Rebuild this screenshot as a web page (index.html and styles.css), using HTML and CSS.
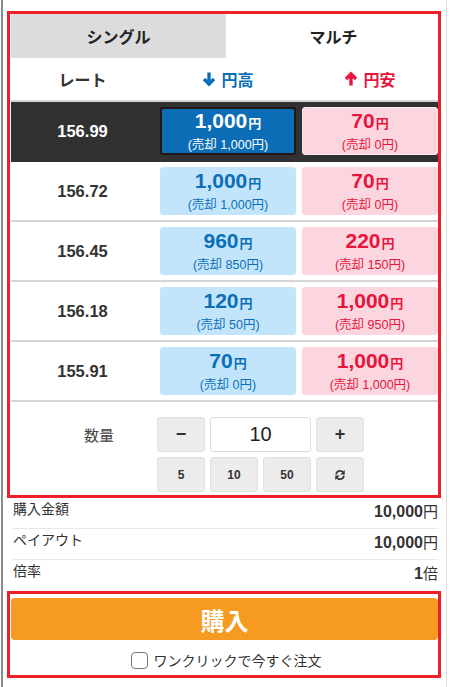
FILE: index.html
```html
<!DOCTYPE html>
<html lang="ja">
<head>
<meta charset="utf-8">
<link rel="stylesheet" href="styles.css">
</head>
<body>
<div class="page">
  <div class="tabs">
    <div class="tab tab-off">シングル</div>
    <div class="tab tab-on">マルチ</div>
  </div>
  <div class="head">
    <div class="hcell">レート</div>
    <div class="hcell h-up"><svg class="arr" viewBox="0 0 14 16"><path d="M7 1.5V13M2 8l5 5 5-5" fill="none" stroke="currentColor" stroke-width="3.4" stroke-linejoin="miter"/></svg>円高</div>
    <div class="hcell h-down"><svg class="arr" viewBox="0 0 14 16"><path d="M7 14.5V3M2 8l5-5 5 5" fill="none" stroke="currentColor" stroke-width="3.4" stroke-linejoin="miter"/></svg>円安</div>
  </div>

  <div class="row row-active">
    <div class="rate">156.99</div>
    <div class="cell cell-blue sel"><div class="amt">1,000<small>円</small></div><div class="sub">(売却 1,000円)</div></div>
    <div class="cell cell-pink selp"><div class="amt">70<small>円</small></div><div class="sub">(売却 0円)</div></div>
  </div>
  <div class="row">
    <div class="rate">156.72</div>
    <div class="cell cell-blue"><div class="amt">1,000<small>円</small></div><div class="sub">(売却 1,000円)</div></div>
    <div class="cell cell-pink"><div class="amt">70<small>円</small></div><div class="sub">(売却 0円)</div></div>
  </div>
  <div class="row">
    <div class="rate">156.45</div>
    <div class="cell cell-blue"><div class="amt">960<small>円</small></div><div class="sub">(売却 850円)</div></div>
    <div class="cell cell-pink"><div class="amt">220<small>円</small></div><div class="sub">(売却 150円)</div></div>
  </div>
  <div class="row">
    <div class="rate">156.18</div>
    <div class="cell cell-blue"><div class="amt">120<small>円</small></div><div class="sub">(売却 50円)</div></div>
    <div class="cell cell-pink"><div class="amt">1,000<small>円</small></div><div class="sub">(売却 950円)</div></div>
  </div>
  <div class="row">
    <div class="rate">155.91</div>
    <div class="cell cell-blue"><div class="amt">70<small>円</small></div><div class="sub">(売却 0円)</div></div>
    <div class="cell cell-pink"><div class="amt">1,000<small>円</small></div><div class="sub">(売却 1,000円)</div></div>
  </div>

  <div class="qty">
    <div class="qty-label">数量</div>
    <div class="qty-grid">
      <div class="btn btn-sign">&minus;</div>
      <div class="qty-input">10</div>
      <div class="btn btn-sign">+</div>
      <div class="btn">5</div>
      <div class="btn">10</div>
      <div class="btn">50</div>
      <div class="btn"><svg class="refresh" viewBox="0 0 16 16"><path d="M2.8 7.2A5.3 5.3 0 0 1 12.2 4.4" fill="none" stroke="currentColor" stroke-width="2.3"/><path d="M14.3 1.3V7.3H8.3z" fill="currentColor"/><path d="M13.2 8.8A5.3 5.3 0 0 1 3.8 11.6" fill="none" stroke="currentColor" stroke-width="2.3"/><path d="M1.7 14.7V8.7H7.7z" fill="currentColor"/></svg></div>
    </div>
  </div>

  <div class="sum">
    <div class="sum-row"><span class="sum-label">購入金額</span><span class="sum-val"><b>10,000</b>円</span></div>
    <div class="sum-row"><span class="sum-label">ペイアウト</span><span class="sum-val"><b>10,000</b>円</span></div>
    <div class="sum-row last"><span class="sum-label">倍率</span><span class="sum-val"><b>1</b>倍</span></div>
  </div>

  <div class="buy">
    <div class="buy-btn">購入</div>
    <label class="one-click"><span class="check"></span>ワンクリックで今すぐ注文</label>
  </div>
</div>
<div class="mark mark-top"></div>
<div class="mark mark-bottom"></div>
</body>
</html>
```
FILE: styles.css
```css
* { box-sizing: border-box; }
html, body { margin: 0; padding: 0; background: #fff; }
body {
  position: relative;
  font-family: "Liberation Sans", "Noto Sans CJK JP", sans-serif;
  color: #333;
  width: 450px;
  height: 687px;
  overflow: hidden;
}
.page {
  margin-left: 1px;
  width: 446px;
  min-height: 687px;
  border-left: 2px solid #8c8c8c;
  border-right: 1px solid #dedede;
  padding: 14px 5px 0 8px;
}
.tabs { display: flex; height: 44px; }
.tab {
  flex: 1;
  display: flex; align-items: center; justify-content: center;
  font-size: 16px; font-weight: bold; color: #222;
}
.tab-off { background: #dcdcdc; }
.tab-on { background: #fff; }

.head {
  display: grid;
  grid-template-columns: 143px 1fr 1fr;
  column-gap: 6px;
  padding-right: 3px;
  height: 44px;
  border-bottom: 2px solid #d4d4d4;
  align-items: center;
}
.hcell {
  display: flex; align-items: center; justify-content: center;
  font-size: 16px; font-weight: bold; color: #333;
}
.h-up { color: #0b6fb8; }
.h-down { color: #e8143c; }
.arr { width: 14px; height: 16px; margin-right: 5px; }

.row {
  display: grid;
  grid-template-columns: 143px 1fr 1fr;
  column-gap: 6px;
  padding: 5px 3px 5px 0;
  height: 60px;
  border-bottom: 2px solid #d4d4d4;
}
.row-active { background: #313131; border-bottom-color: #313131; }
.rate {
  display: flex; align-items: center; justify-content: center;
  font-size: 16.5px; font-weight: bold; color: #333;
}
.row-active .rate { color: #fff; }
.cell {
  border-radius: 3px;
  display: flex; flex-direction: column; align-items: center; justify-content: center;
}
.cell-blue { background: #c3e5fb; color: #0b6fb8; }
.cell-pink { background: #fcd6de; color: #e8143c; }
.sel { background: #0b6db5; color: #fff; border: 2px solid #231416; }
.selp { border: 1px solid #fbe9ed; }
.amt { font-size: 21px; font-weight: bold; line-height: 24px; }
.amt small { font-size: 13px; margin-left: 1px; }
.sub { font-size: 12.5px; line-height: 16px; margin-top: 1px; }

.qty {
  display: flex;
  padding: 15px 0 6px 0;
  height: 96px;
}
.qty-label {
  width: 146px;
  padding-left: 30px;
  height: 35px;
  display: flex; align-items: center; justify-content: center;
  font-size: 15px; color: #444;
}
.qty-grid {
  display: grid;
  grid-template-columns: repeat(4, 48px);
  grid-template-rows: 35px 35px;
  gap: 5px;
}
.btn {
  background: #ececec;
  border: 1px solid #e0e0e0;
  border-radius: 3px;
  display: flex; align-items: center; justify-content: center;
  font-size: 12px; font-weight: bold; color: #333;
}
.btn-sign { font-size: 18px; }
.qty-input {
  grid-column: span 2;
  background: #fff;
  border: 1px solid #dcdcdc;
  border-radius: 3px;
  display: flex; align-items: center; justify-content: center;
  font-size: 20px; color: #222;
}
.refresh { width: 12px; height: 12px; color: #333; }

.sum { padding: 0 3px 0 2px; }
.sum-row {
  display: flex; justify-content: space-between; align-items: flex-start;
  height: 31px;
  border-bottom: 1px solid #e8e8e8;
}
.sum-row.last { border-bottom: none; }
.sum-label { font-size: 14px; line-height: 22px; color: #333; }
.sum-val { font-size: 15px; line-height: 28px; color: #333; }
.sum-val b { font-size: 16px; }

.buy { padding-top: 7px; }
.buy-btn {
  height: 42px;
  margin-right: 3px;
  background: #f59b22;
  border-radius: 4px;
  color: #fff;
  font-size: 24px; font-weight: bold;
  display: flex; align-items: center; justify-content: center;
}
.one-click {
  display: flex; align-items: center; justify-content: center;
  height: 40px;
  font-size: 14px; color: #333;
}
.check {
  width: 17px; height: 17px;
  border: 1.5px solid #777;
  border-radius: 4px;
  margin-right: 6px;
  background: #fff;
}

.mark {
  position: absolute;
  left: 7px;
  width: 434px;
  border: 3px solid #ef1f29;
  pointer-events: none;
}
.mark-top { top: 11px; height: 487px; }
.mark-bottom { top: 591px; height: 87px; }
```
